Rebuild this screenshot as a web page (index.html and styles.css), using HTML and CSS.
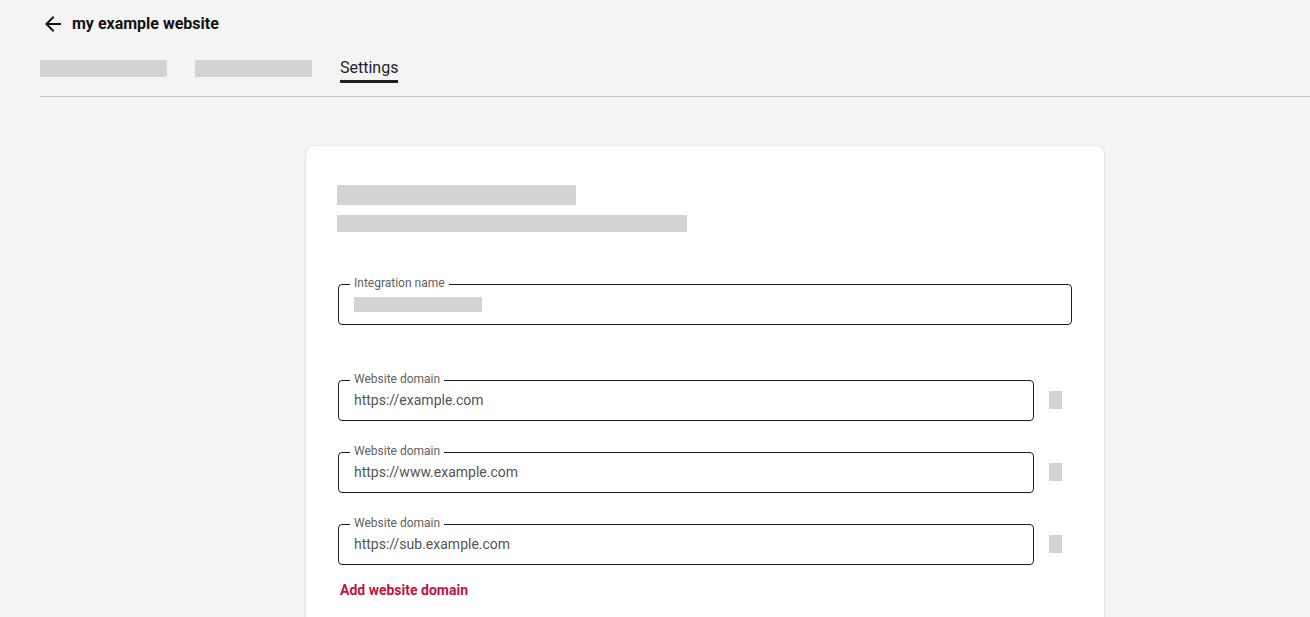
FILE: index.html
```html
<!DOCTYPE html>
<html lang="en">
<head>
<meta charset="utf-8">
<title>my example website - Settings</title>
<link rel="stylesheet" href="styles.css">
</head>
<body>
<header class="topbar">
  <div class="title-row">
    <svg class="back-icon" width="24" height="24" viewBox="0 0 24 24" aria-hidden="true">
      <path d="M20 11H7.83l5.59-5.59L12 4l-8 8 8 8 1.41-1.41L7.83 13H20v-2z" fill="#111"/>
    </svg>
    <h1 class="title">my example website</h1>
  </div>
  <nav class="tabs">
    <div class="tab"><span class="skel skel-tab1"></span></div>
    <div class="tab"><span class="skel skel-tab2"></span></div>
    <div class="tab tab-active">Settings</div>
  </nav>
</header>
<main class="main">
  <section class="card">
    <div class="skel skel-h1"></div>
    <div class="skel skel-h2"></div>

    <fieldset class="field field-name">
      <legend>Integration name</legend>
      <div class="skel skel-input"></div>
    </fieldset>

    <div class="domains">
      <div class="domain-row">
        <fieldset class="field">
          <legend>Website domain</legend>
          <div class="value">https://example.com</div>
        </fieldset>
        <div class="action"><span class="skel skel-icon"></span></div>
      </div>
      <div class="domain-row">
        <fieldset class="field">
          <legend>Website domain</legend>
          <div class="value">https://www.example.com</div>
        </fieldset>
        <div class="action"><span class="skel skel-icon"></span></div>
      </div>
      <div class="domain-row">
        <fieldset class="field">
          <legend>Website domain</legend>
          <div class="value">https://sub.example.com</div>
        </fieldset>
        <div class="action"><span class="skel skel-icon"></span></div>
      </div>
    </div>

    <a class="add-link" href="#">Add website domain</a>
  </section>
</main>
</body>
</html>
```

FILE: styles.css
```css
* { box-sizing: border-box; }

html, body {
  margin: 0;
  padding: 0;
}

body {
  background: #f4f4f4;
  font-family: Roboto, "Liberation Sans", Arial, sans-serif;
  color: #1f1f1f;
  overflow: hidden;
}

.skel {
  display: block;
  background: #d3d3d3;
}

/* Header */
.topbar {
  padding-left: 40px;
}

.title-row {
  display: flex;
  align-items: center;
  gap: 7px;
  padding-top: 12px;
  height: 36px;
}

.back-icon {
  display: block;
  margin-left: 1px;
}

.title {
  margin: 0;
  font-size: 16px;
  line-height: 24px;
  font-weight: 700;
  color: #111;
}

.tabs {
  display: flex;
  align-items: flex-start;
  gap: 28px;
  margin-top: 21px;
  padding-bottom: 13px;
  border-bottom: 1px solid #c6c6c6;
}

.tab {
  font-size: 16px;
  line-height: 20px;
  color: #1f1f1f;
  padding-bottom: 4px;
  border-bottom: 2px solid transparent;
}

.tab-active {
  padding-top: 1px;
  padding-bottom: 2px;
  border-bottom: 3px solid #1f1f1f;
}

.skel-tab1 { width: 127px; height: 17px; margin-top: 3px; }
.skel-tab2 { width: 117px; height: 17px; margin-top: 3px; }

/* Main */
.main {
  padding-left: 306px;
  padding-top: 49px;
}

.card {
  width: 798px;
  background: #fff;
  border-radius: 8px;
  box-shadow: 0 1px 3px rgba(0, 0, 0, 0.14), 0 0 1px rgba(0, 0, 0, 0.08);
  padding: 39px 32px 40px 32px;
}

.skel-h1 { width: 239px; height: 20px; margin-left: -1px; }
.skel-h2 { width: 350px; height: 17px; margin-top: 10px; margin-left: -1px; }

.field {
  margin: 0;
  padding: 0 15px 0 11px;
  border: 1px solid #1f1f1f;
  border-radius: 4px;
  min-width: 0;
}

.field legend {
  padding: 0 4px 2px 4px;
  font-size: 12px;
  line-height: 14px;
  color: #5f5f5f;
}

.field-name {
  margin-top: 44px;
}

.skel-input {
  width: 128px;
  height: 15px;
  margin: 5px 0 12px 4px;
}

.value {
  padding: 2px 4px 10px 4px;
  font-size: 14px;
  line-height: 20px;
  color: #555;
}

.domains {
  display: flex;
  flex-direction: column;
  gap: 23px;
  margin-top: 47px;
}

.domain-row {
  display: flex;
  align-items: flex-start;
}

.domain-row .field {
  flex: 1;
}

.action {
  width: 38px;
  flex: none;
}

.skel-icon {
  width: 13px;
  height: 18px;
  margin: 19px 0 0 15px;
}

.add-link {
  display: inline-block;
  margin-top: 15px;
  margin-left: 2px;
  font-size: 14px;
  line-height: 20px;
  font-weight: 700;
  color: #c0143c;
  text-decoration: none;
}
```
